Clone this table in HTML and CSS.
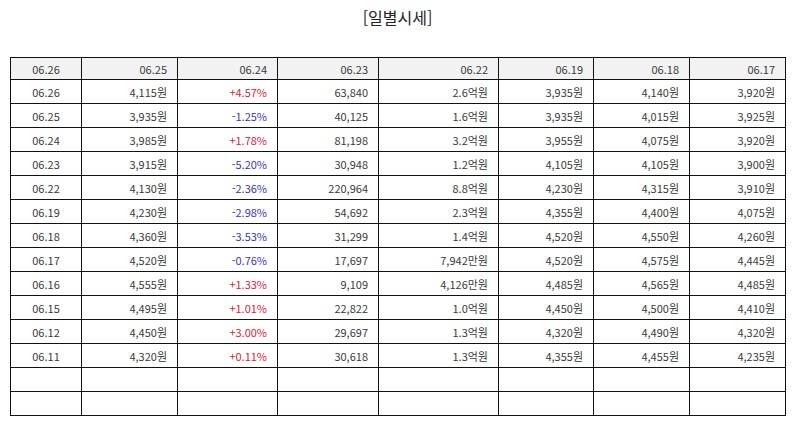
FILE: index.html
```html
<!DOCTYPE html>
<html lang="ko">
<head>
<meta charset="utf-8">
<link rel="stylesheet" href="styles.css">
</head>
<body>
<div class="page">
  <h1 class="title">[일별시세]</h1>
  <table class="prices">
    <colgroup>
      <col class="c1"><col class="c2"><col class="c3"><col class="c4"><col class="c5"><col class="c6"><col class="c7"><col class="c8">
    </colgroup>
    <thead>
      <tr><th class="ctr">06.26</th><th>06.25</th><th>06.24</th><th>06.23</th><th>06.22</th><th>06.19</th><th>06.18</th><th>06.17</th></tr>
    </thead>
    <tbody>
      <tr><td class="ctr">06.26</td><td>4,115원</td><td class="up">+4.57%</td><td>63,840</td><td>2.6억원</td><td>3,935원</td><td>4,140원</td><td>3,920원</td></tr>
      <tr><td class="ctr">06.25</td><td>3,935원</td><td class="down">-1.25%</td><td>40,125</td><td>1.6억원</td><td>3,935원</td><td>4,015원</td><td>3,925원</td></tr>
      <tr><td class="ctr">06.24</td><td>3,985원</td><td class="up">+1.78%</td><td>81,198</td><td>3.2억원</td><td>3,955원</td><td>4,075원</td><td>3,920원</td></tr>
      <tr><td class="ctr">06.23</td><td>3,915원</td><td class="down">-5.20%</td><td>30,948</td><td>1.2억원</td><td>4,105원</td><td>4,105원</td><td>3,900원</td></tr>
      <tr><td class="ctr">06.22</td><td>4,130원</td><td class="down">-2.36%</td><td>220,964</td><td>8.8억원</td><td>4,230원</td><td>4,315원</td><td>3,910원</td></tr>
      <tr><td class="ctr">06.19</td><td>4,230원</td><td class="down">-2.98%</td><td>54,692</td><td>2.3억원</td><td>4,355원</td><td>4,400원</td><td>4,075원</td></tr>
      <tr><td class="ctr">06.18</td><td>4,360원</td><td class="down">-3.53%</td><td>31,299</td><td>1.4억원</td><td>4,520원</td><td>4,550원</td><td>4,260원</td></tr>
      <tr><td class="ctr">06.17</td><td>4,520원</td><td class="down">-0.76%</td><td>17,697</td><td>7,942만원</td><td>4,520원</td><td>4,575원</td><td>4,445원</td></tr>
      <tr><td class="ctr">06.16</td><td>4,555원</td><td class="up">+1.33%</td><td>9,109</td><td>4,126만원</td><td>4,485원</td><td>4,565원</td><td>4,485원</td></tr>
      <tr><td class="ctr">06.15</td><td>4,495원</td><td class="up">+1.01%</td><td>22,822</td><td>1.0억원</td><td>4,450원</td><td>4,500원</td><td>4,410원</td></tr>
      <tr><td class="ctr">06.12</td><td>4,450원</td><td class="up">+3.00%</td><td>29,697</td><td>1.3억원</td><td>4,320원</td><td>4,490원</td><td>4,320원</td></tr>
      <tr><td class="ctr">06.11</td><td>4,320원</td><td class="up">+0.11%</td><td>30,618</td><td>1.3억원</td><td>4,355원</td><td>4,455원</td><td>4,235원</td></tr>
      <tr><td></td><td></td><td></td><td></td><td></td><td></td><td></td><td></td></tr>
      <tr><td></td><td></td><td></td><td></td><td></td><td></td><td></td><td></td></tr>
    </tbody>
  </table>
</div>
</body>
</html>
```

FILE: styles.css
```css
html, body {
  margin: 0;
  padding: 0;
  background: #ffffff;
}
.page {
  padding: 6px 9px 0 10px;
  font-family: "Noto Sans CJK KR", "Noto Sans", sans-serif;
  color: #3a3a3a;
}
.title {
  margin: 0;
  height: 51px;
  text-align: center;
  font-size: 16px;
  font-weight: normal;
  line-height: 22px;
  color: #222222;
}
.prices {
  width: 775px;
  table-layout: fixed;
  border-collapse: collapse;
  font-size: 11px;
}
.c1 { width: 71px; }
.c2 { width: 96px; }
.c3 { width: 100px; }
.c4 { width: 101px; }
.c5 { width: 120px; }
.c6 { width: 95px; }
.c7 { width: 96px; }
.c8 { width: 96px; }
.prices th,
.prices td {
  border: 1px solid #111111;
  padding: 0 10px 0 4px;
  text-align: right;
  font-weight: normal;
  line-height: 14px;
  white-space: nowrap;
}
.prices th {
  height: 21px;
  background: #f2f2f2;
}
.prices td {
  height: 23px;
}
.prices .ctr {
  text-align: center;
  padding: 0;
}
.up { color: #e0203a; }
.down { color: #3535c8; }
```
